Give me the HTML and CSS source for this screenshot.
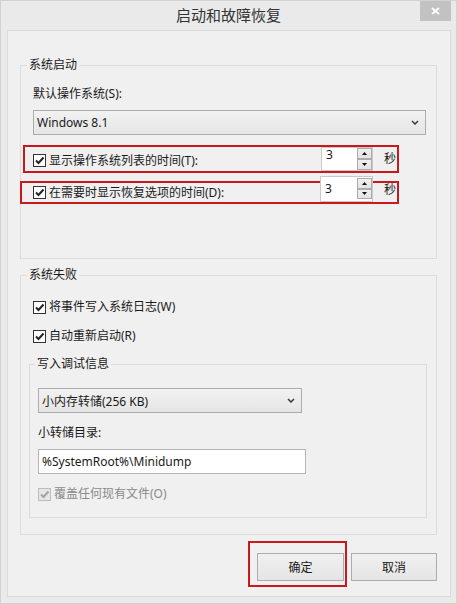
FILE: index.html
```html
<!DOCTYPE html>
<html lang="zh-CN">
<head>
    <meta charset="UTF-8">
    <title>启动和故障恢复</title>
    <link rel="stylesheet" href="styles.css">
</head>
<body>

    <div class="window">
        <div class="titlebar">
            <span></span>
            <div class="title">启动和故障恢复</div>
            <button type="button" class="close">
                <svg width="9" height="8" viewBox="0 0 9 8"><path d="M1 1 L8 7 M8 1 L1 7" stroke="#fff" stroke-width="2" fill="none"/></svg>
            </button>
        </div>

        <div class="client">
            <fieldset class="group startup">
                <legend>系统启动</legend>
                <div class="field-label">默认操作系统(S):</div>
                <div class="select os-select">
                    <span>Windows 8.1</span>
                    <svg width="8" height="5" viewBox="0 0 8 5"><path d="M1 1 L4 4 L7 1" stroke="#3a3a3a" stroke-width="1.5" fill="none"/></svg>
                </div>

                <div class="mark-row row-list">
                    <label class="check">
                        <span class="box"><svg width="11" height="11" viewBox="0 0 11 11"><path d="M2 5.5 L4.5 8 L9.5 2.5" stroke="#222" stroke-width="2" fill="none"/></svg></span>
                        显示操作系统列表的时间(T):
                    </label>
                    <div class="spin">
                        <span class="spin-value">3</span>
                        <span class="spin-btns">
                            <span class="spin-btn"><svg width="5" height="3" viewBox="0 0 5 3"><path d="M0 3 L2.5 0 L5 3 Z" fill="#111"/></svg></span>
                            <span class="spin-btn"><svg width="5" height="3" viewBox="0 0 5 3"><path d="M0 0 L5 0 L2.5 3 Z" fill="#111"/></svg></span>
                        </span>
                    </div>
                    <span class="unit">秒</span>
                </div>

                <div class="mark-row row-recovery">
                    <label class="check">
                        <span class="box"><svg width="11" height="11" viewBox="0 0 11 11"><path d="M2 5.5 L4.5 8 L9.5 2.5" stroke="#222" stroke-width="2" fill="none"/></svg></span>
                        在需要时显示恢复选项的时间(D):
                    </label>
                    <div class="spin spin-late">
                        <span class="spin-value">3</span>
                        <span class="spin-btns">
                            <span class="spin-btn"><svg width="5" height="3" viewBox="0 0 5 3"><path d="M0 3 L2.5 0 L5 3 Z" fill="#111"/></svg></span>
                            <span class="spin-btn"><svg width="5" height="3" viewBox="0 0 5 3"><path d="M0 0 L5 0 L2.5 3 Z" fill="#111"/></svg></span>
                        </span>
                    </div>
                    <span class="unit">秒</span>
                </div>
            </fieldset>

            <fieldset class="group failure">
                <legend>系统失败</legend>
                <label class="check first-check">
                    <span class="box"><svg width="11" height="11" viewBox="0 0 11 11"><path d="M2 5.5 L4.5 8 L9.5 2.5" stroke="#222" stroke-width="2" fill="none"/></svg></span>
                    将事件写入系统日志(W)
                </label>
                <label class="check second-check">
                    <span class="box"><svg width="11" height="11" viewBox="0 0 11 11"><path d="M2 5.5 L4.5 8 L9.5 2.5" stroke="#222" stroke-width="2" fill="none"/></svg></span>
                    自动重新启动(R)
                </label>

                <fieldset class="group debug">
                    <legend>写入调试信息</legend>
                    <div class="select dump-select">
                        <span>小内存转储(256 KB)</span>
                        <svg width="8" height="5" viewBox="0 0 8 5"><path d="M1 1 L4 4 L7 1" stroke="#3a3a3a" stroke-width="1.5" fill="none"/></svg>
                    </div>
                    <div class="field-label dump-label">小转储目录:</div>
                    <div class="textbox">%SystemRoot%\Minidump</div>
                    <label class="check disabled">
                        <span class="box"><svg width="11" height="11" viewBox="0 0 11 11"><path d="M2 5.5 L4.5 8 L9.5 2.5" stroke="#a4a4a4" stroke-width="2" fill="none"/></svg></span>
                        覆盖任何现有文件(O)
                    </label>
                </fieldset>
            </fieldset>

            <div class="actions">
                <div class="mark-ok">
                    <button type="button" class="btn btn-ok">确定</button>
                </div>
                <button type="button" class="btn btn-cancel">取消</button>
            </div>
        </div>
    </div>

</body>
</html>
```

FILE: styles.css
```css
body {
    margin: 0;
    font-family: "Noto Sans", "Noto Sans CJK SC", sans-serif;
    font-size: 12px;
    color: #1a1a1a;
}
.window {
    width: 457px;
    height: 604px;
    box-sizing: border-box;
    border: 1px solid #d2d2d2;
    background: #eaeaea;
}
.titlebar {
    height: 29px;
    display: grid;
    grid-template-columns: 1fr auto 1fr;
}
.title {
    font-size: 15px;
    line-height: 29px;
    color: #333;
}
.close {
    justify-self: end;
    width: 31px;
    height: 20px;
    margin-right: 5px;
    padding: 0;
    border: none;
    background: #c2c2c2;
    display: flex;
    align-items: center;
    justify-content: center;
}
.client {
    height: 567px;
    margin: 0 5px 0 6px;
    box-sizing: border-box;
    border: 1px solid #dadada;
    background: #f0f0f0;
    padding: 26px 13px 0 12px;
}

/* group boxes */
.group {
    margin: 0;
    padding: 0 0 54px;
    min-width: 0;
    border: 1px solid #dcdcdc;
}
.group legend {
    margin-left: 6px;
    padding: 0 2px;
    line-height: 16px;
}
.failure {
    margin-top: 8px;
    padding-bottom: 16px;
}
.debug {
    width: 398px;
    box-sizing: border-box;
    margin: 12px 0 0 8px;
    padding-bottom: 15px;
}
.debug legend {
    margin-left: 5px;
}

.field-label {
    line-height: 16px;
    margin: 13px 0 0 12px;
}
.select {
    height: 25px;
    box-sizing: border-box;
    border: 1px solid #acacac;
    background: linear-gradient(#f2f2f2, #e5e5e5);
    display: flex;
    align-items: center;
    justify-content: space-between;
    padding: 0 6px 0 3px;
}
.os-select {
    margin: 8px 10px 0 12px;
}
.dump-select {
    width: 264px;
    margin: 16px 0 0 8px;
}
.dump-label {
    margin: 12px 0 0 8px;
}
.textbox {
    width: 268px;
    height: 25px;
    box-sizing: border-box;
    margin: 8px 0 0 8px;
    padding-left: 3px;
    border: 1px solid #b4b4b4;
    background: #fff;
    line-height: 23px;
}

/* checkboxes */
.check {
    display: flex;
    align-items: center;
    height: 16px;
    line-height: 16px;
}
.box {
    width: 13px;
    height: 13px;
    box-sizing: border-box;
    border: 1px solid #333;
    background: #fff;
    margin-right: 3px;
    display: flex;
    align-items: center;
    justify-content: center;
}
.first-check {
    margin: 16px 0 0 12px;
}
.second-check {
    margin: 13px 0 0 12px;
}
.check.disabled {
    margin: 12px 0 0 8px;
    color: #8a8a8a;
}
.disabled .box {
    border-color: #bcbcbc;
    background: #e6e6e6;
}

/* red highlight rows */
.mark-row {
    display: flex;
    box-sizing: border-box;
    border: 2px solid #c81a1a;
}
.mark-row .check {
    flex: 1;
}
.row-list {
    width: 376px;
    height: 28px;
    margin: 10px 0 0 2px;
    padding-left: 8px;
}
.row-list .check {
    align-self: center;
    margin-top: 3px;
}
.row-recovery {
    width: 379px;
    height: 23px;
    margin: 8px 0 0 -1px;
    padding-left: 11px;
    align-items: center;
}
.unit {
    align-self: center;
    margin: 0 1px 0 11px;
    line-height: 16px;
}
.row-recovery .unit {
    margin-bottom: 6px;
}

/* spin boxes */
.spin {
    width: 52px;
    box-sizing: border-box;
    display: flex;
    border: 1px solid #c9c9c9;
    background: #fff;
}
.spin-value {
    flex: 1;
    padding: 1px 0 0 4px;
    line-height: 12px;
}
.spin-btns {
    width: 15px;
    display: flex;
    flex-direction: column;
}
.spin-btn {
    flex: 1;
    box-sizing: border-box;
    border: 1px solid #acacac;
    background: linear-gradient(#f0f0f0, #e3e3e3);
    display: flex;
    align-items: center;
    justify-content: center;
}
.spin-late {
    width: 53px;
    height: 26px;
    align-self: flex-start;
    margin-top: -7px;
}
.spin-late .spin-value {
    padding-top: 6px;
}
.spin-late .spin-btns {
    padding: 1px 0 2px;
}

/* dialog buttons */
.actions {
    display: flex;
    justify-content: flex-end;
    align-items: flex-start;
    margin-top: 6px;
}
.mark-ok {
    border: 2px solid #c81a1a;
    padding: 10px 1px 4px 7px;
}
.btn {
    height: 28px;
    box-sizing: border-box;
    border: 1px solid #acacac;
    background: linear-gradient(#f0f0f0, #e5e5e5);
    font-family: "Noto Sans", "Noto Sans CJK SC", sans-serif;
    font-size: 12px;
    color: #1a1a1a;
    padding: 0;
    display: block;
}
.btn-ok {
    width: 87px;
}
.btn-cancel {
    width: 86px;
    margin: 12px 0 0 4px;
}
```
